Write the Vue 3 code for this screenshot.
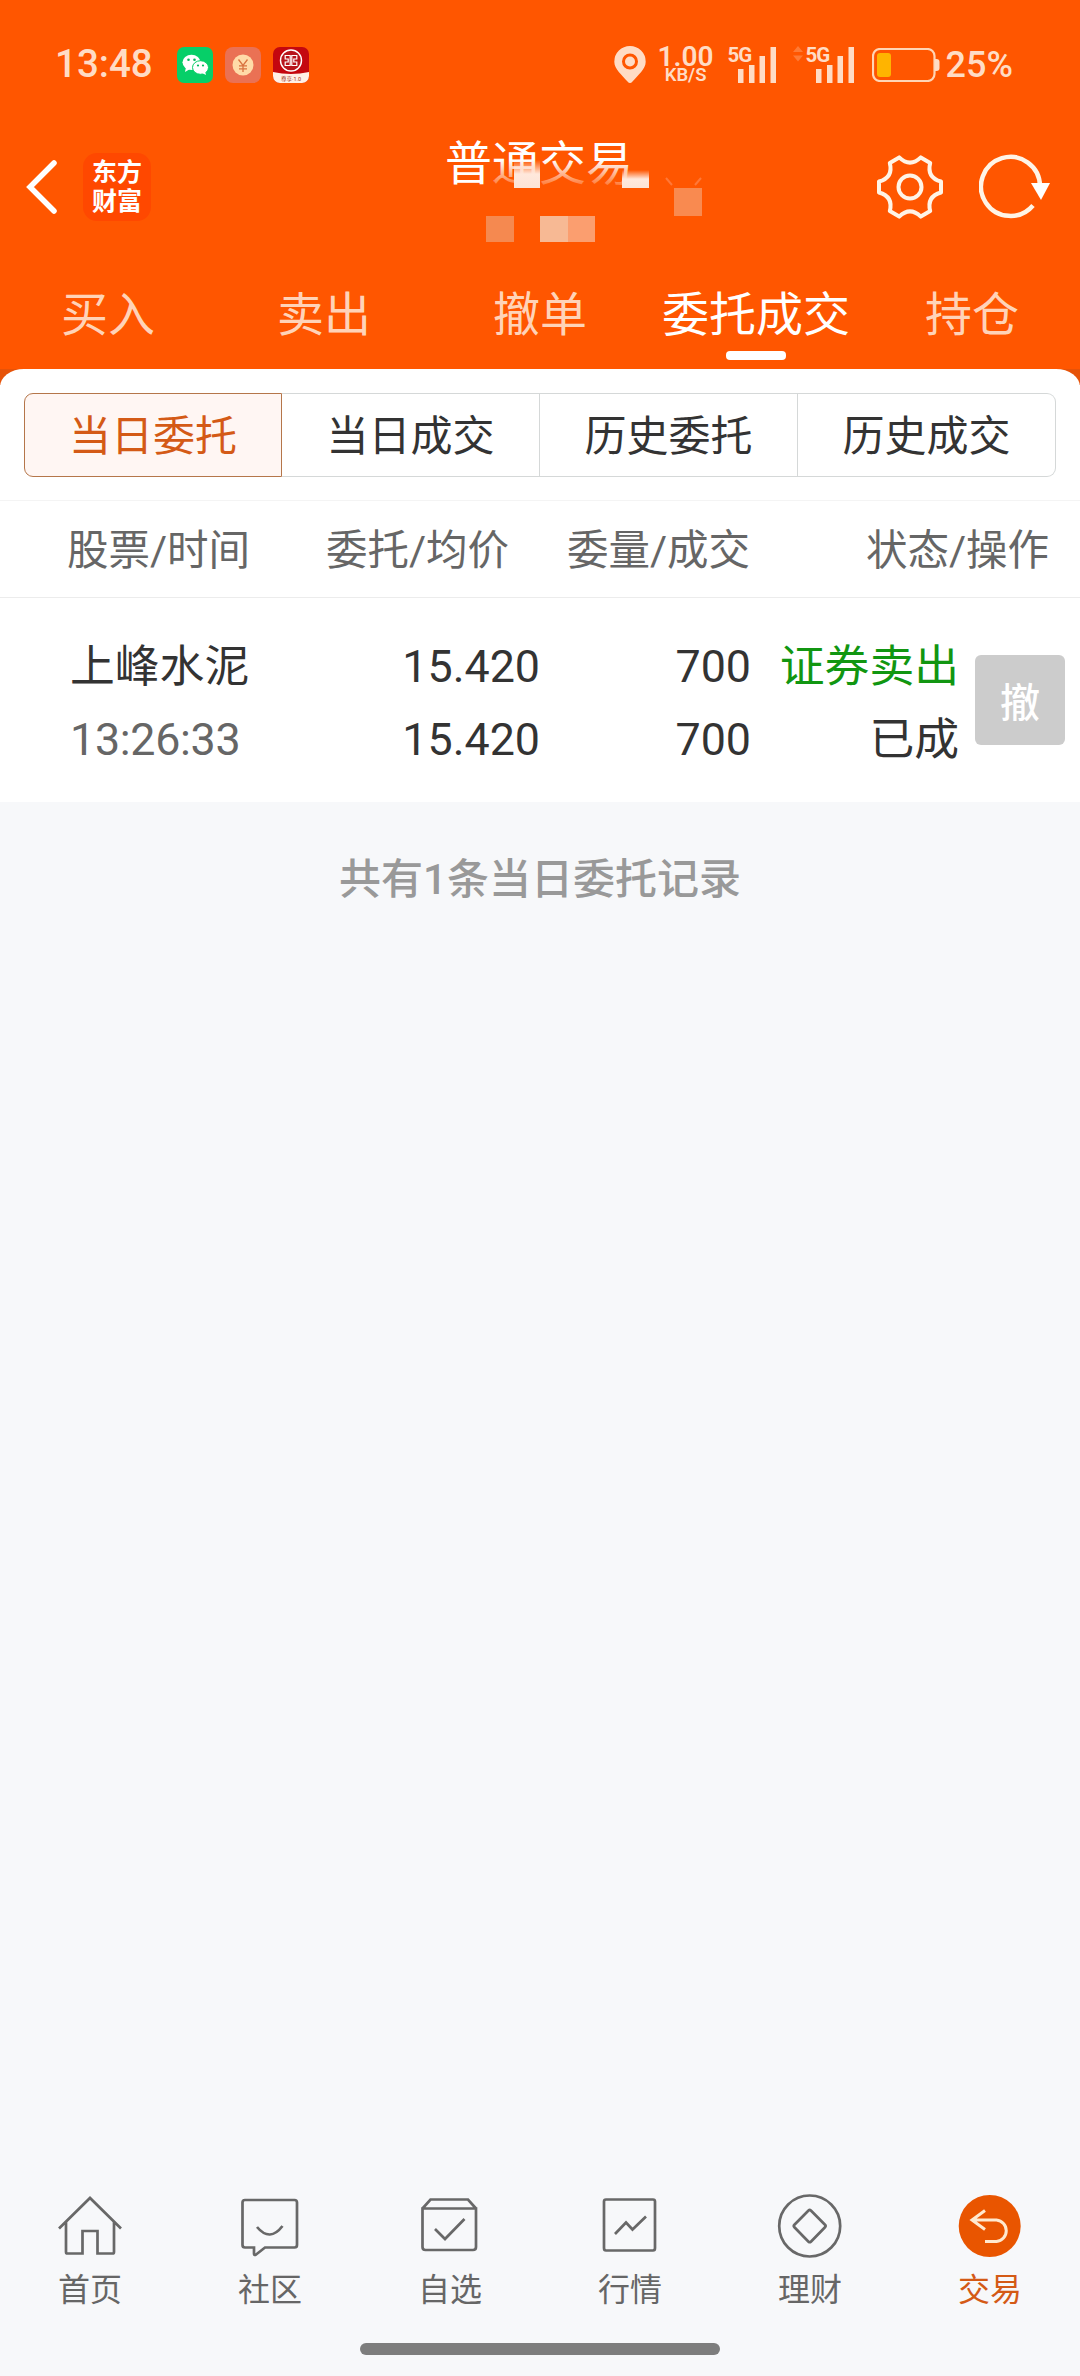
<template>
  <div class="page">
    <header class="header">
      <div class="status">
        <span class="status-time">13:48</span>
        <div class="status-apps">
          <svg class="app-icon" viewBox="0 0 36 36">
            <rect width="36" height="36" rx="7" fill="#06cf68" />
            <ellipse cx="14.5" cy="15.3" rx="9" ry="7.6" fill="#fff" />
            <path d="M9 20l-1 5 5-3z" fill="#fff" />
            <ellipse cx="23.5" cy="20.5" rx="8" ry="6.8" fill="#fff" stroke="#06cf68" stroke-width="1" />
            <path d="M25 26l4 2-1-4z" fill="#fff" />
            <g fill="#06b85c">
              <circle cx="11.5" cy="12.7" r="1.3" />
              <circle cx="17.5" cy="12.7" r="1.3" />
              <circle cx="21" cy="18.5" r="1.1" />
              <circle cx="26" cy="18.5" r="1.1" />
            </g>
          </svg>
          <svg class="app-icon" viewBox="0 0 36 36">
            <rect width="36" height="36" rx="8" fill="#ea7154" />
            <circle cx="18" cy="18" r="10.5" fill="#ffdba8" />
            <path d="M13.5 12.5l4.5 6 4.5-6M18 18.5v6.5M14 18.8h8M14 21.8h8" fill="none" stroke="#d9733f" stroke-width="1.3" />
          </svg>
          <svg class="app-icon" viewBox="0 0 36 36">
            <rect width="36" height="36" rx="7" fill="#c4070f" />
            <path d="M0 25q18 4 36 0v4a7 7 0 0 1-7 7H7a7 7 0 0 1-7-7z" fill="#fff0e6" />
            <circle cx="18" cy="13.5" r="10.5" fill="#b8141c" stroke="#fff" stroke-width="1.4" />
            <path d="M17.200 8.500h-5v3.500h3v3h-3v3.500h5zM18.800 8.500h5v3.500h-3v3h3v3.500h-5z" fill="none" stroke="#fff" stroke-width="1.2" />
            <text x="18" y="34" text-anchor="middle" class="app-caption">尊享·1.0</text>
          </svg>
        </div>
        <div class="status-right">
          <svg class="pin" viewBox="0 0 32 38">
            <path fill-rule="evenodd" d="M16 0a15.7 15.7 0 0 1 15.7 15.7C31.700 23 24 29 18.500 35.500q-2.500 3-5 0C8 29 .3 23 .3 15.700A15.700 15.700 0 0 1 16 0zM16 7.500a8 8 0 1 0 0 16 8 8 0 0 0 0-16z" />
            <circle cx="16" cy="15.500" r="5" />
          </svg>
          <div class="speed">
            <b>1.00</b>
            <span>KB/S</span>
          </div>
          <svg v-for="n in 2" :key="n" class="signal" viewBox="0 0 64 38">
            <g v-if="n === 2" class="signal-arrows">
              <path d="M0 6l5-6 5 6zM0 9.500l5 6 5-6z" />
            </g>
            <text x="12.500" y="16" class="signal-text">5G</text>
            <path d="M23 23h5.500v14H23zM34 19h5.500v18H34zM44.500 10H50v27h-5.500zM55.500 1H61v36h-5.500z" />
          </svg>
          <svg class="battery" viewBox="0 0 68 34">
            <rect x="1" y="1" width="61.500" height="32" rx="7" fill="none" stroke="#ffd5b5" stroke-width="2.200" />
            <rect x="5" y="5" width="14" height="24" rx="3" fill="#ffb400" />
            <path d="M63 11h1.500a3 3 0 0 1 3 3v6a3 3 0 0 1-3 3H63z" />
          </svg>
          <span class="percent">25%</span>
        </div>
      </div>

      <div class="title-bar">
        <svg class="back" viewBox="0 0 32 54">
          <path d="M28 3L4 27l24 24" fill="none" stroke="#fff" stroke-width="5.500" stroke-linecap="round" />
        </svg>
        <div class="brand"><span>东方</span><span>财富</span></div>
        <div class="title">
          <h1>普通交易</h1>
          <div class="title-fade"></div>
          <svg class="mosaic" viewBox="0 0 200 110">
            <defs>
              <linearGradient id="blockFade" x1="0" y1="0" x2="0" y2="1">
                <stop offset="0" stop-color="#ffe8dc" stop-opacity="0" />
                <stop offset="0.500" stop-color="#ffe8dc" />
                <stop offset="1" stop-color="#fce4d6" />
              </linearGradient>
            </defs>
            <rect x="34" y="30" width="26" height="28" fill="url(#blockFade)" />
            <rect x="142" y="40" width="27" height="18" fill="url(#blockFade)" />
            <rect x="194" y="58" width="28" height="28" fill="#f98a50" />
            <rect x="6" y="86" width="28" height="26" fill="#f58950" />
            <rect x="60" y="86" width="28" height="26" fill="#f7b994" />
            <rect x="88" y="86" width="27" height="26" fill="#fb9e6f" />
            <path d="M186 48l6 7M221 48l-6 7" stroke="#ff7838" stroke-width="2" />
          </svg>
        </div>
        <svg class="gear" viewBox="-34 -34 68 68">
          <path :d="gearPath" fill="none" stroke="#fff4e6" stroke-width="4" stroke-linejoin="round" />
          <circle r="11.500" fill="none" stroke="#fff4e6" stroke-width="4" />
        </svg>
        <svg class="refresh" viewBox="0 0 72 66">
          <path d="M61 32A29.500 29.500 0 1 0 54 51.500" fill="none" stroke="#fff4e6" stroke-width="4.500" />
          <path d="M52 29h19l-9 17z" fill="#fff" />
        </svg>
      </div>

      <nav class="tabs">
        <div v-for="tab in tabs" :key="tab" :class="['tab', { 'tab--active': tab === '委托成交' }]">{{ tab }}</div>
      </nav>
    </header>

    <div class="panel-wrap">
      <section class="panel">
        <div class="segments">
          <div
            v-for="(item, i) in segments"
            :key="item"
            :class="['segment', { 'segment--active': i === 0 }]"
          >{{ item }}</div>
        </div>
        <div class="table-head">
          <span>股票/时间</span>
          <span class="right">委托/均价</span>
          <span class="right">委量/成交</span>
          <span class="right">状态/操作</span>
        </div>
        <div v-for="order in orders" :key="order.time" class="order">
          <div class="cell"><span>{{ order.name }}</span><span class="time">{{ order.time }}</span></div>
          <div class="cell right"><span>{{ order.price }}</span><span>{{ order.avg }}</span></div>
          <div class="cell right"><span>{{ order.amount }}</span><span>{{ order.done }}</span></div>
          <div class="cell right"><span class="sell">{{ order.type }}</span><span>{{ order.state }}</span></div>
          <button class="cancel" disabled>撤</button>
        </div>
      </section>
    </div>

    <p class="summary">共有{{ orders.length }}条当日委托记录</p>

    <footer class="bottom-nav">
      <div v-for="item in navs" :key="item.label" :class="['nav-item', { 'nav-item--active': item.active }]">
        <svg class="nav-icon" viewBox="0 0 64 64">
          <circle v-if="item.active" cx="31.700" cy="32" r="31" class="nav-disc" />
          <circle v-if="item.ring" cx="31.700" cy="32" r="30.500" />
          <path :d="item.path" />
        </svg>
        <span>{{ item.label }}</span>
      </div>
    </footer>
    <div class="home-bar"></div>
  </div>
</template>

<script setup>
const tabs = ['买入', '卖出', '撤单', '委托成交', '持仓'];
const segments = ['当日委托', '当日成交', '历史委托', '历史成交'];

const orders = [
  {
    name: '上峰水泥',
    time: '13:26:33',
    price: '15.420',
    avg: '15.420',
    amount: 700,
    done: 700,
    type: '证券卖出',
    state: '已成',
  },
];

const navs = [
  { label: '首页', path: 'M1 34.500L32 4l31 30.500M8 28v30q0 1.500 1.500 1.500h15V37h15v22.500h15q1.500 0 1.500-1.500V28' },
  { label: '社区', path: 'M7 6h49.500q2.500 0 2.500 2.500V51q0 2.500-2.500 2.500H27L17.500 61q-1.500 0-1.500-1.500v-6H7q-2.500 0-2.500-2.500V8.500Q4.500 6 7 6zM19 33q13 15.500 25.500-1' },
  { label: '自选', path: 'M4.500 14.500l8-9h37.500l8 9M4.500 14.500h53.500V53q0 3-3 3H7.500q-3 0-3-3zM17 35l10 10 19.500-20' },
  { label: '行情', path: 'M8 5.500h47q2 0 2 2V54q0 2.500-2 2.500H8q-2 0-2-2.500V7.500q0-2 2-2zM17 40l11-11.500 6.500 7L48 22.500' },
  { label: '理财', ring: true, path: 'M30.500 16.500q1.200-1 2.400 0L47 30.800q1.200 1.200 0 2.400L32.900 47.700q-1.200 1-2.400 0L16.400 33.200q-1.200-1.200 0-2.400z' },
  { label: '交易', active: true, path: 'M27 16.500L14 26l13 9.500M14 26h24.500a10.800 10.800 0 0 1 0 21.500H27' },
];

// six lobes: two corner points each, joined by an inward curve
const point = (deg, r) => {
  const a = (deg * Math.PI) / 180;
  return `${(r * Math.cos(a)).toFixed(1)} ${(r * Math.sin(a)).toFixed(1)}`;
};
const gearPath = [0, 60, 120, 180, 240, 300]
  .map((deg, i) => `${i ? 'L' : 'M'}${point(deg - 10, 31.5)} L${point(deg + 10, 31.5)} Q${point(deg + 30, 19)} ${point(deg + 50, 31.5)}`)
  .join(' ') + 'Z';
</script>

<style>
body {
  margin: 0;
  background: #f7f8fa;
}
</style>

<style scoped>
.page {
  display: flex;
  flex-direction: column;
  width: 1080px;
  height: 2376px;
  overflow: hidden;
  background: #f7f8fa;
  color: #333;
  font-family: Roboto, "Noto Sans CJK SC", sans-serif;
}

.header {
  display: flex;
  flex-direction: column;
  height: 369px;
  background: #ff5600;
}

.status {
  display: flex;
  align-items: center;
  height: 130px;
  padding: 0 67px 0 55px;
  box-sizing: border-box;
  color: #ffdcc5;
  fill: #ffdcc5;
}

.status-time {
  width: 122px;
  font-size: 38.5px;
  font-weight: 500;
  line-height: 44px;
  margin-top: -2px;
}

.status-apps {
  display: flex;
  gap: 12px;
}

.app-icon {
  width: 36px;
  height: 36px;
}

.app-caption {
  font-size: 5.5px;
  fill: #a03020;
}

.status-right {
  display: flex;
  align-items: center;
  margin-left: auto;
}

.pin {
  width: 32px;
  height: 38px;
  margin-top: -1px;
}

.speed {
  display: flex;
  flex-direction: column;
  align-items: center;
  width: 56px;
  margin: 0 1px 0 12px;
}

.speed b {
  font-size: 28px;
  font-weight: 600;
  line-height: 21px;
}

.speed span {
  font-size: 18.5px;
  font-weight: 600;
  line-height: 17px;
}

.signal {
  width: 64px;
  height: 38px;
  margin: -1px 14px 0 0;
  overflow: visible;
}

.signal-text {
  font-size: 20.5px;
  font-weight: 700;
  letter-spacing: -1px;
}

.signal-arrows {
  fill: #ff7a35;
}

.battery {
  width: 68px;
  height: 34px;
  margin: 0 6px 0 1px;
}

.percent {
  font-size: 36px;
  font-weight: 500;
}

.title-bar {
  display: flex;
  align-items: center;
  height: 114px;
  padding-left: 26px;
}

.back {
  width: 32px;
  height: 54px;
}

.brand {
  display: flex;
  flex-direction: column;
  align-items: center;
  justify-content: center;
  width: 68px;
  height: 68px;
  margin-left: 25px;
  border-radius: 14px;
  background: #ff4800;
  color: #fff;
  font-size: 25px;
  font-weight: 700;
  line-height: 29px;
}

.title {
  position: relative;
  width: 200px;
  height: 114px;
  margin-left: 293px;
}

.title h1 {
  margin: 0;
  padding: 1px 0 0 1px;
  color: #fff;
  font-size: 47px;
  font-weight: 400;
  line-height: 66px;
  white-space: nowrap;
}

.title-fade {
  position: absolute;
  left: 50px;
  top: 30px;
  width: 150px;
  height: 38px;
  background: linear-gradient(rgba(255, 86, 0, 0), #ff5600 85%);
}

.mosaic {
  position: absolute;
  left: 36px;
  top: 0;
  width: 200px;
  height: 110px;
  overflow: visible;
}

.gear {
  width: 68px;
  height: 68px;
  margin-left: 232px;
}

.refresh {
  width: 72px;
  height: 66px;
  margin-left: 35px;
}

.tabs {
  display: grid;
  grid-template-columns: repeat(5, 1fr);
  height: 125px;
}

.tab {
  position: relative;
  height: 125px;
  color: #ffd3b8;
  font-size: 47px;
  line-height: 141px;
  text-align: center;
}

.tab--active {
  color: #fff;
}

.tab--active::after {
  content: "";
  position: absolute;
  left: 78px;
  bottom: 9px;
  width: 60px;
  height: 9px;
  border-radius: 4px;
  background: #fff;
}

.panel-wrap {
  background: linear-gradient(#e65309 16px, #fff 16px);
}

.panel {
  height: 433px;
  border-radius: 24px 24px 0 0 / 18px 18px 0 0;
  background: #fff;
}

.segments {
  display: grid;
  grid-template-columns: repeat(4, 258px);
  width: 1032px;
  height: 131px;
  box-sizing: border-box;
  padding-top: 24px;
  margin: 0 24px;
}

.segment {
  height: 84px;
  box-sizing: border-box;
  border: 1px solid #d5d8d8;
  border-left-width: 0;
  font-size: 42px;
  line-height: 86px;
  text-align: center;
}

.segment:last-child {
  border-radius: 0 9px 9px 0;
}

.segment--active {
  border: 1px solid #b5764a;
  border-radius: 9px 0 0 9px;
  background: #fff6f3;
  color: #d45a16;
}

.right {
  text-align: right;
}

.table-head {
  display: grid;
  grid-template-columns: 242px 200px 241px 299px;
  height: 98px;
  padding-left: 67px;
  border-top: 1px solid #f4f4f4;
  border-bottom: 1px solid #ececec;
  box-sizing: border-box;
  color: #666;
  font-size: 41.5px;
  line-height: 100px;
  white-space: nowrap;
}

.order {
  display: grid;
  grid-template-columns: 270px 200px 211px 208px 107px;
  padding: 32px 0 0 70px;
}

.cell {
  display: flex;
  flex-direction: column;
  font-size: 44.8px;
  line-height: 73px;
  white-space: nowrap;
}

.time {
  color: #666;
  letter-spacing: -0.3px;
}

.sell {
  color: #119611;
}

.cancel {
  width: 90px;
  height: 90px;
  margin: 25px 0 0 16px;
  padding: 0;
  border: none;
  border-radius: 6px;
  background: #ccc;
  color: #fff;
  font-family: inherit;
  font-size: 40px;
  font-weight: 500;
}

.summary {
  margin: 42px 0 0;
  color: #999;
  font-size: 42px;
  font-weight: 500;
  line-height: 72px;
  text-align: center;
}

.bottom-nav {
  display: grid;
  grid-template-columns: repeat(6, 1fr);
  margin-top: auto;
}

.nav-item {
  display: flex;
  flex-direction: column;
  align-items: center;
  color: #666;
  font-size: 32px;
  line-height: 40px;
}

.nav-icon {
  width: 64px;
  height: 64px;
  margin-bottom: 12px;
  fill: none;
  stroke: #686868;
  stroke-width: 2.7;
  overflow: visible;
}

.nav-item--active {
  color: #d45a16;
}

.nav-item--active .nav-icon {
  stroke: #ffe9cf;
  stroke-width: 3;
}

.nav-icon .nav-disc {
  fill: #e95500;
  stroke: none;
}

.home-bar {
  width: 360px;
  height: 12px;
  margin: 33px auto 21px;
  border-radius: 6px;
  background: #7d7d7d;
}
</style>
